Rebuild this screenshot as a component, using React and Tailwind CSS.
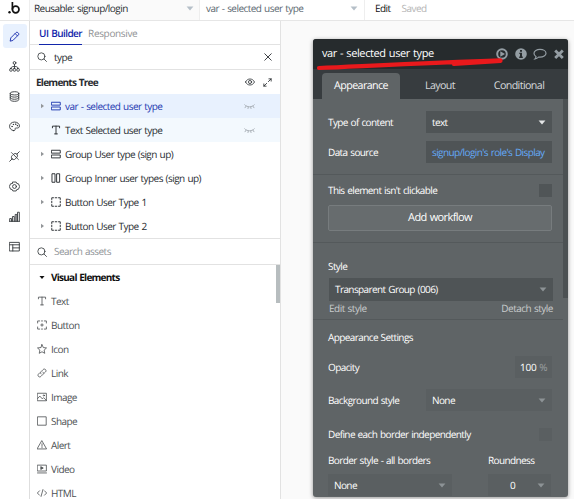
import React from "react";

function Svg({ size = 12, sw = 1.3, children, className = "" }) {
  return (
    <svg
      width={size}
      height={size}
      viewBox="0 0 16 16"
      fill="none"
      stroke="currentColor"
      strokeWidth={sw}
      strokeLinecap="round"
      strokeLinejoin="round"
      className={"shrink-0 " + className}
    >
      {children}
    </svg>
  );
}

const icons = {
  pencil: <path d="M1.8 14.2l.8-4.2L10.4 2.2a1.6 1.6 0 012.3 0l1.1 1.1a1.6 1.6 0 010 2.3L6 13.4zM9 3.8L12.2 7" />,
  tree: (
    <>
      <circle cx="8" cy="2.8" r="2" />
      <rect x="1" y="11" width="3.6" height="3.8" rx="1.2" />
      <rect x="6.2" y="11" width="3.6" height="3.8" rx="1.2" />
      <rect x="11.4" y="11" width="3.6" height="3.8" rx="1.2" />
      <path d="M8 5v6M2.8 11c0-2 1-3 5.2-3s5.2 1 5.2 3" />
    </>
  ),
  data: (
    <>
      <ellipse cx="8" cy="3.4" rx="6.2" ry="2.4" />
      <path d="M1.8 3.4v9.2c0 1.3 2.8 2.4 6.2 2.4s6.2-1.1 6.2-2.4V3.4M1.8 6.5c0 1.3 2.8 2.4 6.2 2.4s6.2-1.1 6.2-2.4M1.8 9.6c0 1.3 2.8 2.4 6.2 2.4s6.2-1.1 6.2-2.4" />
    </>
  ),
  palette: (
    <>
      <path d="M6.5 14C2.5 13.2.8 10.5.8 7.8.8 4.3 4 1.5 8 1.5s7.2 2.5 7.2 5.7c0 2.3-1.7 3.3-4 3-1.8-.2-2.7.5-2.3 1.8.4 1.3-.8 2.3-2.4 2z" />
      <circle cx="4.4" cy="8" r=".4" />
      <circle cx="6.2" cy="5" r=".4" />
      <circle cx="9.6" cy="4.6" r=".4" />
      <circle cx="12" cy="6.8" r=".4" />
    </>
  ),
  plug: <path d="M1 15l3.500-3.500M4.500 11.500c-1.500-1.600-1.400-3.300 0-4.700L6.300 5l4.700 4.700-1.800 1.800c-1.400 1.400-3.100 1.500-4.700 0zM6.300 5c1.800-1.800 3.700-1.800 5.200-.5 1.300 1.500 1.300 3.400-.5 5.200M11.500 4.500L15 1M5 3.700L3.700 2.400M13.600 12.300L12.300 11" />,
  gear: (
    <>
      <path d="M5.600 1.500h4.800l1 2.200 2.300.3L15.500 8l-1.800 4-2.300.3-1 2.200H5.600l-1-2.200L2.300 12 .5 8l1.800-4 2.300-.3z" />
      <circle cx="8" cy="8" r="2.800" />
    </>
  ),
  chart: <path d="M1 15V11h2.600v4M5 15V8h2.600v7M9 15V5h2.400v10M12.400 15V1.800H15V15M.8 15h14.400" />,
  layout: <path d="M1 2h14v12.500H1zM1 5.500h14M5.500 5.500v9M5.500 10H15" />,
  search: (
    <>
      <circle cx="7" cy="7" r="5.700" />
      <path d="M11.200 11.200L15.200 15.200" />
    </>
  ),
  rows: <path d="M1.200 2h13.600v4.600H1.200zM1.200 9.600h13.600v4.600H1.200z" />,
  cols: <path d="M2.200 1.200h4.200v13.600H2.200zM9.600 1.200h4.200v13.600H9.600z" />,
  text: <path d="M2.300 4.500V1.800h11.400v2.700M8 1.800v12.400M5.800 14.200h4.400" />,
  dashed: <path d="M1.200 4V1.200H4M6.700 1.200h2.600M12 1.200h2.800V4M14.800 6.700v2.600M14.800 12v2.800H12M9.300 14.800H6.700M4 14.800H1.200V12M1.200 9.300V6.700" />,
  button: <path d="M1 4.800V1.500h3.300M11.700 1.500H15v3.300M15 11.200v3.300h-3.300M4.300 14.500H1v-3.300M8 6v4M6 8h4M7.200 1.500h1.600M7.200 14.500h1.600" />,
  star: <path d="M8 1l2.100 4.700 5.100.6-3.800 3.500 1 5.100L8 12.400l-4.400 2.500 1-5.100L.8 6.300l5.100-.6z" />,
  link: <path d="M6.500 9.500c-1.200-1.200-1-2.600 0-3.700l3.200-3.200c1.200-1.200 2.800-1.200 3.900-.1s1.100 2.700-.1 3.900l-2 2M9.500 6.500c1.200 1.200 1 2.600 0 3.700l-3.200 3.200c-1.200 1.200-2.800 1.200-3.900.1s-1.100-2.700.1-3.900l2-2" />,
  image: (
    <>
      <path d="M1 2h14v12H1zM1 10.500l3.500-4 4 4.500 2-2 4.500 4.500" />
      <circle cx="11" cy="5.500" r="1" />
    </>
  ),
  shape: <path d="M1.300 1.300h13.400v13.400H1.300z" />,
  alert: <path d="M8 1.500l7.300 12.800H.7zM8 6v4.300M8 12v.3" />,
  video: (
    <>
      <path d="M1 1.800h14v9.400H1zM.8 14.300h14.400" />
      <path d="M6.500 4.500l3.500 2-3.500 2z" fill="currentColor" />
    </>
  ),
  code: <path d="M4 4.500L.6 8 4 11.500M12 4.500L15.400 8 12 11.500M9.500 2.500l-3 11" />,
  close: <path d="M1.500 1.500l13 13M14.500 1.500l-13 13" />,
  eye: (
    <>
      <path d="M.8 8C2.500 4.700 5 3.200 8 3.200s5.500 1.500 7.200 4.800c-1.700 3.300-4.200 4.800-7.200 4.800S2.500 11.300.8 8z" />
      <circle cx="8" cy="8" r="2.500" />
    </>
  ),
  expand: <path d="M10.500 1.500h4v4M14.500 1.500L9.500 6.500M5.500 14.500h-4v-4M1.500 14.500l5-5" />,
  closedEye: <path d="M1 5.500c3.500 4 10.500 4 14 0M3 7.500l-1.500 2.300M6.300 8.700L5.800 11M9.700 8.700l.5 2.300M13 7.500l1.500 2.300" />,
};

function Caret({ className }) {
  return (
    <svg width="8" height="5" viewBox="0 0 8 5" className={"shrink-0 " + className}>
      <path d="M.6.500h6.800L4 4.500z" fill="currentColor" />
    </svg>
  );
}

const rail = ["pencil", "tree", "data", "palette", "plug", "gear", "chart", "layout"];

const elements = [
  { icon: "rows", label: "var - selected user type", arrow: true, hidden: true, row: "bg-[#e8f1fe] text-[#1d38b0]" },
  { icon: "text", label: "Text Selected user type", hidden: true, row: "bg-[#f3f9fe] text-[#292d31]" },
  { icon: "rows", label: "Group User type (sign up)", arrow: true, row: "text-[#292d31]" },
  { icon: "cols", label: "Group Inner user types (sign up)", arrow: true, row: "text-[#292d31]" },
  { icon: "dashed", label: "Button User Type 1", arrow: true, row: "text-[#292d31]" },
  { icon: "dashed", label: "Button User Type 2", arrow: true, row: "text-[#292d31]" },
];

const assets = [
  ["text", "Text"],
  ["button", "Button"],
  ["star", "Icon"],
  ["link", "Link"],
  ["image", "Image"],
  ["shape", "Shape"],
  ["alert", "Alert"],
  ["video", "Video"],
  ["code", "HTML"],
];

function TopBar() {
  return (
    <header className="flex h-[21px] shrink-0 border-b border-[#e6e6e6] bg-white">
      <div className="flex w-[29px] items-start pl-[8px] pt-[2px]">
        <svg width="13" height="12" viewBox="0 0 13 12" fill="none">
          <circle cx="1.500" cy="10.300" r="1.200" fill="#111" />
          <path d="M4.400 0v7.500" stroke="#111" strokeWidth="1.700" />
          <circle cx="7.700" cy="7.500" r="3.300" stroke="#111" strokeWidth="1.700" />
        </svg>
      </div>
      <div className="flex w-[171px] items-center justify-between border-x border-[#eeeeee] bg-[#fafafa] pb-[4px] pl-[4px] pr-[5px] text-[#292d31]">
        <span>Reusable: signup/login</span>
        <Caret className="text-[#b5bfc8]" />
      </div>
      <div className="flex w-[165px] items-center justify-between border-r border-[#eeeeee] pb-[3px] pl-[6px] pr-[6px] text-[#5b6871]">
        <span>var - selected user type</span>
        <Caret className="text-[#b5bfc8]" />
      </div>
      <div className="flex items-center gap-[11px] pb-[4px] pl-[10px]">
        <span className="text-[#111111]">Edit</span>
        <span className="text-[#b5b5b5]">Saved</span>
      </div>
    </header>
  );
}

function Sidebar() {
  return (
    <aside className="flex w-[251px] shrink-0 flex-col border-r border-[#e2e2e2] bg-white">
      <div className="flex h-[24px] shrink-0 gap-[6px] border-b border-[#e2e2e2] pl-[9px] leading-[25px]">
        <span className="h-[24px] border-b border-[#1226ab] font-semibold text-[#1226ab]">UI Builder</span>
        <span className="tracking-[-0.35px] text-[#8f9193]">Responsive</span>
      </div>
      <div className="flex h-[25px] shrink-0 items-center border-b border-[#e2e2e2] pl-[7px] pr-[8px] text-[#292d31]">
        <Svg size={10} className="text-[#33373a]">{icons.search}</Svg>
        <span className="ml-[7px] flex-1">type</span>
        <Svg size={8} sw={1.8}>{icons.close}</Svg>
      </div>
      <div className="flex h-[24px] shrink-0 items-center pl-[6px] pr-[8px] text-[#292d31]">
        <span className="flex-1 font-bold tracking-[-0.75px]">Elements Tree</span>
        <Svg size={10} className="mr-[8px]">{icons.eye}</Svg>
        <Svg size={9} sw={1.500}>{icons.expand}</Svg>
      </div>
      {elements.map((e) => (
        <div key={e.label} className={"flex h-[24px] shrink-0 items-center pl-[10px] pr-[25px] " + e.row}>
          <svg width="5" height="6" viewBox="0 0 5 6" className="mr-[6px] shrink-0 text-[#939699]">
            {e.arrow && <path d="M1 .8L4 3 1 5.200z" fill="currentColor" />}
          </svg>
          <Svg size={10} sw={1.500}>{icons[e.icon]}</Svg>
          <span className="ml-[4px] flex-1">{e.label}</span>
          {e.hidden && <Svg size={11} className="text-[#a4abb2]">{icons.closedEye}</Svg>}
        </div>
      ))}
      <div className="flex h-[27px] shrink-0 items-center border-b border-t border-[#e2e2e2] pl-[7px] text-[#8f9498]">
        <Svg size={10} className="text-[#33373a]">{icons.search}</Svg>
        <span className="ml-[7px]">Search assets</span>
      </div>
      <div className="flex min-h-0 flex-1 justify-between overflow-hidden">
        <div>
          <div className="flex h-[24px] items-center pl-[9px] font-bold tracking-[-0.75px] text-[#111111]">
            <Caret className="w-[6px]" />
            <span className="ml-[6px]">Visual Elements</span>
          </div>
          {assets.map(([icon, label]) => (
            <div key={label} className="flex h-[24px] items-center gap-[4px] pl-[7px] text-[#4c5053]">
              <Svg size={10} sw={1.300}>{icons[icon]}</Svg>
              <span>{label}</span>
            </div>
          ))}
        </div>
        <div className="h-[38px] w-[4px] bg-[#b7bdbf]" />
      </div>
    </aside>
  );
}

function Header() {
  return (
    <div className="relative flex h-[30px] shrink-0 items-center bg-[#262b2d] pl-[9px] pr-[4.5px] text-[11px] tracking-[-0.4px] text-white">
      <span className="flex-1">var - selected user type</span>
      <div className="flex items-center gap-[6.5px] text-[#949da3]">
        <svg width="12" height="12" viewBox="0 0 12 12">
          <circle cx="6" cy="6" r="4.800" fill="none" stroke="currentColor" strokeWidth="2" />
          <path d="M4.300 3.300L9 6 4.300 8.700z" fill="currentColor" />
        </svg>
        <svg width="12" height="12" viewBox="0 0 12 12">
          <circle cx="6" cy="6" r="5.800" fill="currentColor" />
          <path d="M5 2h2v1.700H5zM4.300 4.700H7v3.800h.8V10H4.200V8.500H5V6h-.7z" fill="#262b2d" />
        </svg>
        <svg width="14" height="12" viewBox="0 0 14 12" fill="none" stroke="currentColor" strokeWidth="1.200">
          <path d="M7 1.300c3.300 0 6 1.700 6 3.900s-2.700 4-6 4l-1.400-.1C4.600 10 3.500 10.700 2 10.900c.7-.7 1-1.400 1-2.300C1.700 7.800 1 6.600 1 5.200c0-2.200 2.700-3.900 6-3.900z" />
        </svg>
        <svg width="10" height="12" viewBox="0 0 10 12" stroke="currentColor" strokeWidth="2.800">
          <path d="M1.200 2.500l7.600 7.600M8.800 2.500l-7.600 7.600" />
        </svg>
      </div>
      <svg width="196" height="14" viewBox="0 0 196 14" className="absolute left-[3px] top-[18px]">
        <path d="M3 11C60 8.500 120 5.500 184.500 3.400M138 7L184.500 3.800" fill="none" stroke="#e9191c" strokeWidth="4.200" strokeLinecap="round" />
      </svg>
    </div>
  );
}

function Divider({ className }) {
  return <div className={"h-px shrink-0 bg-[#54595b] " + className} />;
}

function Select({ value, className, caret = "text-[#8d9396]" }) {
  return (
    <div className={"flex items-center justify-between pl-[6px] pr-[6px] text-white " + className}>
      <span>{value}</span>
      <Caret className={caret} />
    </div>
  );
}

function PropertyEditor() {
  return (
    <section className="ml-[32px] mt-[18px] flex h-[458px] w-[255px] flex-col overflow-hidden rounded-[3px] bg-[#5f6466] font-medium tracking-[-0.6px] text-white shadow-[0_1px_4px_rgba(0,0,0,0.4)]">
      <Header />
      <nav className="flex h-[30px] shrink-0 items-end bg-[#373c3f] pl-[9px] text-[10.7px] leading-[27px] tracking-[-0.6px] text-[#d5d8da]">
        <span className="h-[26px] w-[78px] rounded-t-[4px] bg-[#5f6466] text-center text-white">Appearance</span>
        <span className="h-[26px] w-[80px] text-center">Layout</span>
        <span className="h-[26px] w-[78px] text-center">Conditional</span>
      </nav>
      <div className="flex min-h-0 flex-1">
        <div className="w-[250px]">
          <div className="mt-[12px] flex h-[22px] items-center justify-between pl-[15px] pr-[11px]">
            <span>Type of content</span>
            <Select value="text" className="h-[22px] w-[126px] bg-[#4f5456]" caret="text-[#e4e6e7]" />
          </div>
          <div className="mt-[8px] flex h-[22px] items-center justify-between pl-[15px] pr-[11px]">
            <span>Data source</span>
            <div className="flex h-[22px] w-[126px] items-center overflow-hidden whitespace-nowrap bg-[#4f5456] pl-[6px] text-[#64aaf8]">signup/login's role's Display</div>
          </div>
          <Divider className="mt-[11px]" />
          <div className="mt-[9px] flex h-[13px] items-center justify-between pl-[15px] pr-[11px]">
            <span>This element isn't clickable</span>
            <div className="size-[13px] bg-[#505557]" />
          </div>
          <div className="ml-[15px] mt-[8px] flex h-[26px] w-[224px] items-center justify-center rounded-[2px] border border-[#777c7e] bg-[#676c6e] text-[11px]">Add workflow</div>
          <Divider className="mt-[11px]" />
          <div className="mt-[16px] h-[14px] pl-[15px] leading-[14px]">Style</div>
          <Select value="Transparent Group (006)" className="ml-[16px] mt-[5px] h-[23px] w-[224px] bg-[#4f5456]" />
          <div className="flex h-[14px] w-[240px] justify-between pl-[16px] font-normal leading-[14px] tracking-[-0.5px] text-[#c9cccd]">
            <span>Edit style</span>
            <span>Detach style</span>
          </div>
          <Divider className="mt-[4px]" />
          <div className="mt-[10px] h-[14px] pl-[15px] leading-[14px]">Appearance Settings</div>
          <div className="mt-[12px] flex h-[22px] items-center justify-between pl-[15px] pr-[11px]">
            <span>Opacity</span>
            <div className="flex h-[22px] w-[37px] items-center justify-end gap-[3px] bg-[#5a5f61] pr-[5px]">
              <span className="tracking-[-0.3px]">100</span>
              <span className="text-[#9a9fa2]">%</span>
            </div>
          </div>
          <div className="mt-[11px] flex h-[22px] items-center justify-between pl-[15px] pr-[11px]">
            <span>Background style</span>
            <Select value="None" className="h-[22px] w-[126px] bg-[#5a5f61]" />
          </div>
          <div className="mt-[17px] flex h-[13px] items-center justify-between pl-[15px] pr-[11px]">
            <span>Define each border independently</span>
            <div className="size-[13px] bg-[#5a5f61]" />
          </div>
          <div className="mt-[12px] flex h-[14px] pl-[15px] leading-[14px]">
            <span className="w-[160px]">Border style - all borders</span>
            <span>Roundness</span>
          </div>
          <div className="mt-[7px] flex gap-[36px] pl-[15px]">
            <Select value="None" className="h-[22px] w-[124px] bg-[#5a5f61]" />
            <Select value="0" className="h-[22px] w-[63px] bg-[#5a5f61] !pl-[22px]" />
          </div>
        </div>
        <div className="h-[199px] w-[5px] bg-[#4c5153]" />
      </div>
    </section>
  );
}

export default function App() {
  return (
    <div className="flex h-[499px] w-[574px] flex-col overflow-hidden bg-[#fafafa] font-['Open_Sans','Noto_Sans',sans-serif] text-[10px] tracking-[-0.55px] [text-rendering:geometricPrecision] [word-spacing:0.7px]">
      <TopBar />
      <div className="flex min-h-0 flex-1">
        <nav className="flex w-[30px] shrink-0 flex-col items-center gap-[6px] border-r border-[#dedede] bg-white pt-[3px] text-[#33373a]">
          {rail.map((name, i) => (
            <div
              key={name}
              className={"flex size-[24px] items-center justify-center rounded-[3px] " + (i === 0 ? "bg-[#e8f1fe] text-[#1226ab]" : "")}
            >
              <Svg size={11} sw={1.300}>{icons[name]}</Svg>
            </div>
          ))}
        </nav>
        <Sidebar />
        <PropertyEditor />
      </div>
    </div>
  );
}
